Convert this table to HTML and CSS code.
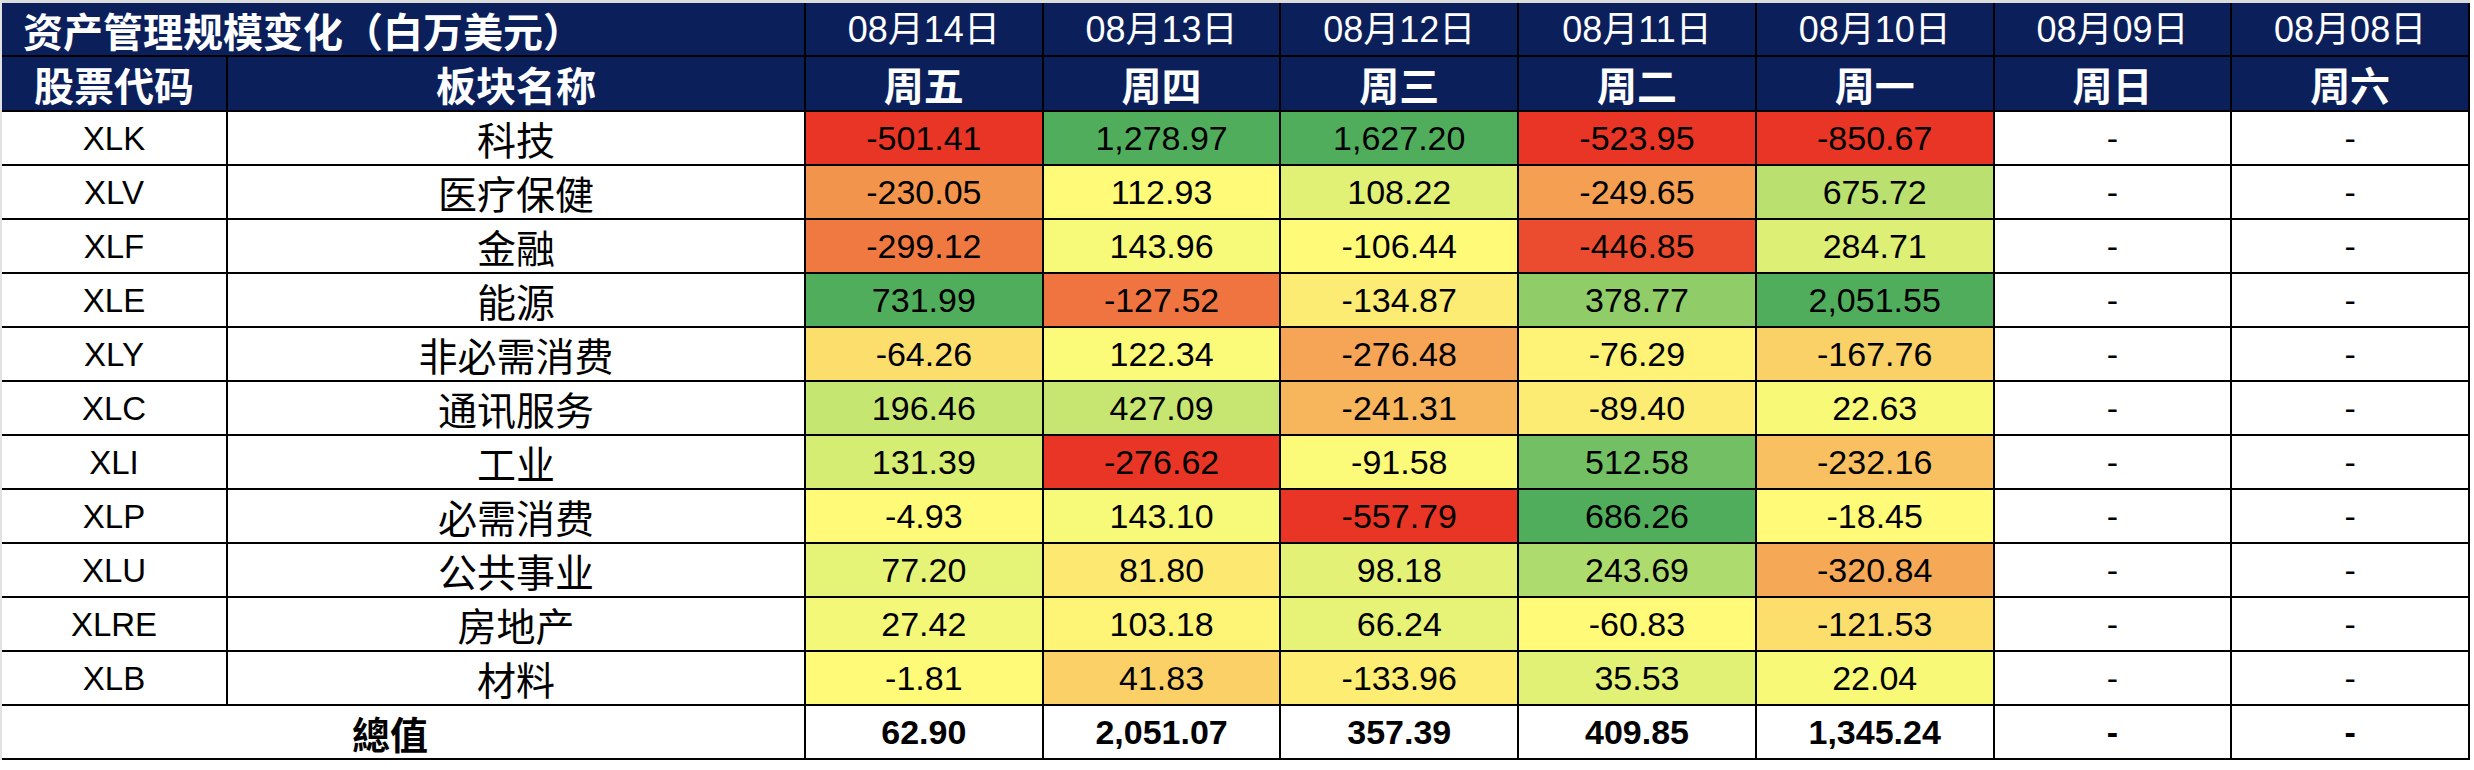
FILE: index.html
```html
<!DOCTYPE html>
<html lang="zh-CN">
<head>
<meta charset="utf-8">
<title>资产管理规模变化</title>
<link rel="stylesheet" href="styles.css">
</head>
<body>
<div class="page">
  <div class="sheet">
    <div class="c hd title">资产管理规模变化（白万美元）</div>
    <div class="c hd date">08月14日</div>
    <div class="c hd date">08月13日</div>
    <div class="c hd date">08月12日</div>
    <div class="c hd date">08月11日</div>
    <div class="c hd date">08月10日</div>
    <div class="c hd date">08月09日</div>
    <div class="c hd date">08月08日</div>

    <div class="c hd lbl">股票代码</div>
    <div class="c hd lbl">板块名称</div>
    <div class="c hd lbl">周五</div>
    <div class="c hd lbl">周四</div>
    <div class="c hd lbl">周三</div>
    <div class="c hd lbl">周二</div>
    <div class="c hd lbl">周一</div>
    <div class="c hd lbl">周日</div>
    <div class="c hd lbl">周六</div>

    <div class="c tk">XLK</div><div class="c nm">科技</div>
    <div class="c num" data-col="0">-501.41</div><div class="c num" data-col="1">1,278.97</div><div class="c num" data-col="2">1,627.20</div><div class="c num" data-col="3">-523.95</div><div class="c num" data-col="4">-850.67</div><div class="c dash">-</div><div class="c dash">-</div>

    <div class="c tk">XLV</div><div class="c nm">医疗保健</div>
    <div class="c num" data-col="0">-230.05</div><div class="c num" data-col="1">112.93</div><div class="c num" data-col="2">108.22</div><div class="c num" data-col="3">-249.65</div><div class="c num" data-col="4">675.72</div><div class="c dash">-</div><div class="c dash">-</div>

    <div class="c tk">XLF</div><div class="c nm">金融</div>
    <div class="c num" data-col="0">-299.12</div><div class="c num" data-col="1">143.96</div><div class="c num" data-col="2">-106.44</div><div class="c num" data-col="3">-446.85</div><div class="c num" data-col="4">284.71</div><div class="c dash">-</div><div class="c dash">-</div>

    <div class="c tk">XLE</div><div class="c nm">能源</div>
    <div class="c num" data-col="0">731.99</div><div class="c num" data-col="1">-127.52</div><div class="c num" data-col="2">-134.87</div><div class="c num" data-col="3">378.77</div><div class="c num" data-col="4">2,051.55</div><div class="c dash">-</div><div class="c dash">-</div>

    <div class="c tk">XLY</div><div class="c nm">非必需消费</div>
    <div class="c num" data-col="0">-64.26</div><div class="c num" data-col="1">122.34</div><div class="c num" data-col="2">-276.48</div><div class="c num" data-col="3">-76.29</div><div class="c num" data-col="4">-167.76</div><div class="c dash">-</div><div class="c dash">-</div>

    <div class="c tk">XLC</div><div class="c nm">通讯服务</div>
    <div class="c num" data-col="0">196.46</div><div class="c num" data-col="1">427.09</div><div class="c num" data-col="2">-241.31</div><div class="c num" data-col="3">-89.40</div><div class="c num" data-col="4">22.63</div><div class="c dash">-</div><div class="c dash">-</div>

    <div class="c tk">XLI</div><div class="c nm">工业</div>
    <div class="c num" data-col="0">131.39</div><div class="c num" data-col="1">-276.62</div><div class="c num" data-col="2">-91.58</div><div class="c num" data-col="3">512.58</div><div class="c num" data-col="4">-232.16</div><div class="c dash">-</div><div class="c dash">-</div>

    <div class="c tk">XLP</div><div class="c nm">必需消费</div>
    <div class="c num" data-col="0">-4.93</div><div class="c num" data-col="1">143.10</div><div class="c num" data-col="2">-557.79</div><div class="c num" data-col="3">686.26</div><div class="c num" data-col="4">-18.45</div><div class="c dash">-</div><div class="c dash">-</div>

    <div class="c tk">XLU</div><div class="c nm">公共事业</div>
    <div class="c num" data-col="0">77.20</div><div class="c num" data-col="1">81.80</div><div class="c num" data-col="2">98.18</div><div class="c num" data-col="3">243.69</div><div class="c num" data-col="4">-320.84</div><div class="c dash">-</div><div class="c dash">-</div>

    <div class="c tk">XLRE</div><div class="c nm">房地产</div>
    <div class="c num" data-col="0">27.42</div><div class="c num" data-col="1">103.18</div><div class="c num" data-col="2">66.24</div><div class="c num" data-col="3">-60.83</div><div class="c num" data-col="4">-121.53</div><div class="c dash">-</div><div class="c dash">-</div>

    <div class="c tk">XLB</div><div class="c nm">材料</div>
    <div class="c num" data-col="0">-1.81</div><div class="c num" data-col="1">41.83</div><div class="c num" data-col="2">-133.96</div><div class="c num" data-col="3">35.53</div><div class="c num" data-col="4">22.04</div><div class="c dash">-</div><div class="c dash">-</div>

    <div class="c total-label">總值</div>
    <div class="c tot">62.90</div><div class="c tot">2,051.07</div><div class="c tot">357.39</div><div class="c tot">409.85</div><div class="c tot">1,345.24</div><div class="c tot">-</div><div class="c tot">-</div>
  </div>
</div>
<script src="script.js"></script>
</body>
</html>
```

FILE: styles.css
```css
* { box-sizing: border-box; }

html, body {
  margin: 0;
  padding: 0;
  background: #ffffff;
}

body {
  font-family: "Liberation Sans", "Noto Sans CJK SC", sans-serif;
  color: #000;
}

.page {
  width: max-content;
  border-top: 3px solid #dcdcdc;
  border-left: 2px solid #e2e2e2;
}

.sheet {
  display: grid;
  width: 2468px;
  grid-template-columns: 226px 578px repeat(7, 1fr);
  grid-template-rows: 54px 55px repeat(12, 54px);
}

.c {
  display: flex;
  align-items: center;
  justify-content: center;
  border-right: 2px solid #000;
  border-bottom: 2px solid #000;
  background: #fff;
  white-space: nowrap;
  line-height: 1.15;
  padding-top: 1px;
}

.hd {
  background: #0b1f5b;
  color: #fff;
}

.title {
  grid-column: span 2;
  justify-content: flex-start;
  padding-left: 21px;
  font-family: "Noto Sans CJK SC", sans-serif;
  font-weight: 700;
  font-size: 40px;
}

.date {
  font-size: 36px;
  font-weight: 400;
}

.lbl {
  font-family: "Noto Sans CJK SC", sans-serif;
  font-weight: 700;
  font-size: 40px;
}

.tk {
  font-size: 33px;
}

.nm {
  font-family: "Noto Sans CJK SC", sans-serif;
  font-size: 39px;
}

.num {
  font-size: 34px;
}

.dash {
  font-size: 34px;
}

.total-label {
  grid-column: span 2;
  font-family: "Noto Sans CJK SC", sans-serif;
  font-weight: 700;
  font-size: 38px;
  padding-right: 26px;
}

.tot {
  font-size: 34px;
  font-weight: 700;
}
```

FILE: script.js
```js
(function () {
  var RED = [232, 53, 37];
  var YEL = [255, 251, 121];
  var GRN = [80, 173, 92];

  function lerp(a, b, t) { return Math.round(a + (b - a) * t); }

  function median(arr) {
    var s = arr.slice().sort(function (a, b) { return a - b; });
    var n = s.length;
    var pos = (n - 1) * 0.5;
    var lo = Math.floor(pos), hi = Math.ceil(pos);
    return s[lo] + (s[hi] - s[lo]) * (pos - lo);
  }

  var cells = document.querySelectorAll('.num[data-col]');
  var cols = {};
  cells.forEach(function (el) {
    var k = el.getAttribute('data-col');
    var v = parseFloat(el.textContent.replace(/,/g, ''));
    el._v = v;
    (cols[k] = cols[k] || []).push(v);
  });

  var stats = {};
  Object.keys(cols).forEach(function (k) {
    var a = cols[k];
    stats[k] = { min: Math.min.apply(null, a), max: Math.max.apply(null, a), mid: median(a) };
  });

  cells.forEach(function (el) {
    var s = stats[el.getAttribute('data-col')];
    var v = el._v, c;
    if (v <= s.mid) {
      var t = s.mid === s.min ? 1 : (v - s.min) / (s.mid - s.min);
      var tt = Math.pow(t, 1.2);
      c = [lerp(RED[0], YEL[0], tt), lerp(RED[1], YEL[1], tt), lerp(RED[2], YEL[2], tt)];
    } else {
      var u = (v - s.mid) / (s.max - s.mid);
      c = [lerp(YEL[0], GRN[0], Math.pow(u, 0.85)), lerp(YEL[1], GRN[1], u), lerp(YEL[2], GRN[2], u)];
    }
    el.style.backgroundColor = 'rgb(' + c.join(',') + ')';
  });
})();
```
